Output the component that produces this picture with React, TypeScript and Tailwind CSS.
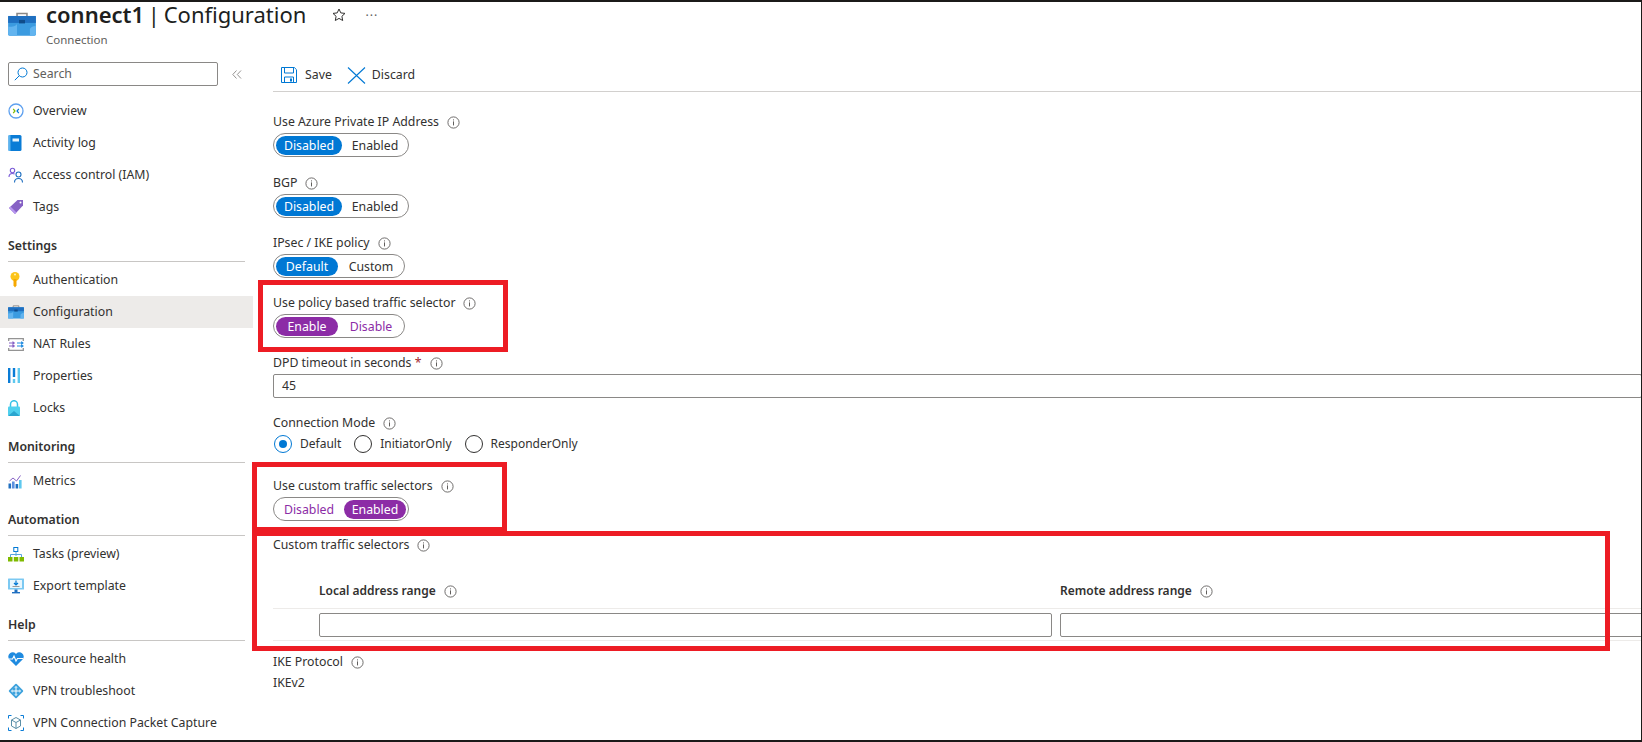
import { ReactNode } from "react";

const Info = () => (
    <svg width="13" height="13" viewBox="0 0 13 13" className="shrink-0">
        <circle cx="6.5" cy="6.5" r="5.6" fill="none" stroke="#605e5c" strokeWidth="0.9" />
        <rect x="6" y="5.4" width="1" height="4" fill="#605e5c" />
        <rect x="6" y="3.4" width="1" height="1" fill="#605e5c" />
    </svg>
);

const Briefcase = ({ size }: { size: number }) => (
    <svg width={size} height={size * 0.85} viewBox="0 0 28 24">
        <path d="M9 5V1.5h10V5" fill="none" stroke="#8a8886" strokeWidth="1.6" />
        <rect x="0" y="4" width="28" height="20" rx="1.5" fill="#3b9be0" />
        <rect x="0" y="4" width="28" height="7" fill="#1f6fc0" />
        <path d="M0 15c5 0 8-1 9-3v12H1.5A1.5 1.5 0 0 1 0 22.5zM28 14c-3 0-5 1-6 3v7h4.5a1.5 1.5 0 0 0 1.5-1.5z" fill="#62b4ef" />
        <rect x="11" y="8" width="6" height="3.5" fill="#0f4c8a" />
    </svg>
);

const icons: Record<string, ReactNode> = {
    overview: (
        <svg width="16" height="16" viewBox="0 0 16 16">
            <circle cx="8" cy="8" r="7" fill="#fff" stroke="#5ea0ef" strokeWidth="1.3" />
            <path d="M5.2 5.8 7 8l-1.8 2.2" fill="none" stroke="#7fba00" strokeWidth="1.2" />
            <path d="M10.8 5.8 9 8l1.8 2.2" fill="none" stroke="#0078d4" strokeWidth="1.2" />
        </svg>
    ),
    activity: (
        <svg width="14" height="16" viewBox="0 0 14 16">
            <rect x="0.5" y="0" width="13" height="16" rx="1.5" fill="#0a7cd6" />
            <rect x="0.5" y="0" width="2" height="16" fill="#5ab4f0" />
            <rect x="4.5" y="3.5" width="6.5" height="3" fill="#e6f3fc" />
        </svg>
    ),
    iam: (
        <svg width="16" height="16" viewBox="0 0 16 16" fill="none" stroke="#1f6fc0" strokeWidth="1.1">
            <circle cx="4.5" cy="3.5" r="2.2" stroke="#7a5bd6" />
            <path d="M1 10c0-2.5 1.5-3.5 3.5-3.5 1 0 1.6.2 2.1.6" stroke="#7a5bd6" />
            <circle cx="10.5" cy="7.5" r="2.5" />
            <path d="M6.5 15.5c0-2.8 1.6-4 4-4s4 1.2 4 4" />
        </svg>
    ),
    tags: (
        <svg width="16" height="16" viewBox="0 0 16 16">
            <path d="M9.5 1H15v5.5L7 15 1 9z" fill="#8661c5" />
            <path d="M1 9l6 6 1.5-1.6-6-6z" fill="#b796f0" />
            <circle cx="12.5" cy="3.5" r="1" fill="#fff" />
        </svg>
    ),
    key: (
        <svg width="14" height="16" viewBox="0 0 14 16">
            <circle cx="7" cy="4.5" r="4.5" fill="#fcc419" />
            <path d="M5.5 7h3v6.5L7 15.5l-1.5-2z" fill="#f6a800" />
            <circle cx="7" cy="2.6" r="1" fill="#fff3bf" />
        </svg>
    ),
    config: <Briefcase size={16} />,
    nat: (
        <svg width="16" height="13" viewBox="0 0 16 13" fill="none">
            <path d="M.7 3V.7h14.6V3M.7 10v2.3h14.6V10" stroke="#949494" strokeWidth="1.3" />
            <path d="M1 5h5M4.5 3.6 6.3 5 4.5 6.4" stroke="#8661c5" strokeWidth="1.1" />
            <path d="M1 8h5M4.5 6.8 6.3 8 4.5 9.4" stroke="#8661c5" strokeWidth="1.1" />
            <path d="M9 5h6M13.2 3.6 15 5l-1.8 1.4" stroke="#1f8be0" strokeWidth="1.1" />
            <path d="M9 8h6M13.2 6.8 15 8l-1.8 1.4" stroke="#1f8be0" strokeWidth="1.1" />
        </svg>
    ),
    props: (
        <svg width="12" height="16" viewBox="0 0 12 16">
            <rect x="0" y="0" width="2.4" height="15" fill="#0a7cd6" />
            <rect x="4.8" y="0" width="2.4" height="9" fill="#0a7cd6" />
            <rect x="4.8" y="11" width="2.4" height="4" fill="#5ec8ee" />
            <rect x="9.6" y="0" width="2.4" height="15" fill="#5ec8ee" />
        </svg>
    ),
    lock: (
        <svg width="12" height="16" viewBox="0 0 12 16">
            <path d="M2.5 7V4.2a3.5 3.5 0 0 1 7 0V7" fill="none" stroke="#37c2e6" strokeWidth="1.5" />
            <rect x="0" y="6.5" width="12" height="9.5" rx="1" fill="#50d0ee" />
            <path d="M0 16l6-5 6 5z" fill="#2aa5cf" />
        </svg>
    ),
    metrics: (
        <svg width="14" height="15" viewBox="0 0 14 14">
            <rect x="0.5" y="9" width="2.6" height="5" fill="#1f6fc0" />
            <rect x="4" y="7" width="2.6" height="7" fill="#5a8fe0" />
            <rect x="7.6" y="9.5" width="2.6" height="4.5" fill="#1f6fc0" />
            <rect x="11" y="5.5" width="2.6" height="8.5" fill="#5ec8ee" />
            <path d="M1.5 6.5 5 3.5l3.5 3L12.5 1" fill="none" stroke="#8661c5" strokeWidth="1" />
        </svg>
    ),
    tasks: (
        <svg width="16" height="15" viewBox="0 0 16 15" fill="none">
            <rect x="5.8" y="0.5" width="4" height="4" stroke="#0078d4" />
            <path d="M8 4.5V9M2.5 10V7.5h11V10" stroke="#59a5de" />
            <rect x="0" y="10" width="4.5" height="4.5" fill="#7fba00" />
            <rect x="5.8" y="10" width="4.5" height="4.5" fill="#7fba00" />
            <rect x="11.5" y="10" width="4.5" height="4.5" fill="#7fba00" />
        </svg>
    ),
    exportT: (
        <svg width="16" height="16" viewBox="0 0 16 16">
            <rect x="0" y="0.5" width="16" height="11" rx="0.5" fill="#7cc9f2" />
            <rect x="2" y="2" width="12" height="8" fill="#e8f6fd" />
            <path d="M8 2.5v4M6 5l2 2 2-2" fill="none" stroke="#0078d4" strokeWidth="1.2" />
            <rect x="4.5" y="8" width="7" height="1" fill="#999" />
            <path d="M6.5 11.5h3V14h-3z" fill="#1f6fc0" />
            <rect x="4" y="14" width="8" height="1.4" fill="#1f6fc0" />
        </svg>
    ),
    health: (
        <svg width="16" height="14" viewBox="0 0 16 14">
            <path d="M8 14 1.2 7.2A4 4 0 0 1 8 2a4 4 0 0 1 6.8 5.2z" fill="#1f8be0" />
            <path d="M1 7h3.5l1.5-3 2 5 1.5-2.5H15" fill="none" stroke="#fff" strokeWidth="1.1" />
        </svg>
    ),
    vpn: (
        <svg width="16" height="16" viewBox="0 0 16 16">
            <rect x="2.6" y="2.6" width="10.8" height="10.8" rx="1" transform="rotate(45 8 8)" fill="#3fa3dd" />
            <path d="M8 3.5v9M3.5 8h9" stroke="#fff" strokeWidth="1" />
            <path d="M6.8 4.8 8 3.5l1.2 1.3M6.8 11.2 8 12.5l1.2-1.3M4.8 6.8 3.5 8l1.3 1.2M11.2 6.8 12.5 8l-1.3 1.2" fill="none" stroke="#fff" strokeWidth="0.8" />
        </svg>
    ),
    capture: (
        <svg width="16" height="16" viewBox="0 0 16 16" fill="none" stroke="#0a7cd6" strokeWidth="1">
            <path d="M.5 3.5v-3h3M12.5.5h3v3M15.5 12.5v3h-3M3.5 15.5h-3v-3" />
            <path d="M8 2.5l4.5 2.5v6L8 13.5 3.5 11V5z" stroke="#5a8fa8" />
            <path d="M3.5 5 8 7.5 12.5 5M8 7.5v6" stroke="#5a8fa8" />
        </svg>
    ),
};

const nav = [
    {
        items: [
            { name: "Overview", icon: "overview" },
            { name: "Activity log", icon: "activity" },
            { name: "Access control (IAM)", icon: "iam" },
            { name: "Tags", icon: "tags" },
        ],
    },
    {
        title: "Settings",
        items: [
            { name: "Authentication", icon: "key" },
            { name: "Configuration", icon: "config", active: true },
            { name: "NAT Rules", icon: "nat" },
            { name: "Properties", icon: "props" },
            { name: "Locks", icon: "lock" },
        ],
    },
    { title: "Monitoring", items: [{ name: "Metrics", icon: "metrics" }] },
    {
        title: "Automation",
        items: [
            { name: "Tasks (preview)", icon: "tasks" },
            { name: "Export template", icon: "exportT" },
        ],
    },
    {
        title: "Help",
        items: [
            { name: "Resource health", icon: "health" },
            { name: "VPN troubleshoot", icon: "vpn" },
            { name: "VPN Connection Packet Capture", icon: "capture" },
        ],
    },
];

function Sidebar() {
    return (
        <div className="w-[253px] shrink-0">
            <div className="flex items-center h-6">
                <div className="ml-2 w-[210px] h-6 border border-[#8a8886] rounded-[2px] flex items-center pl-[5px] gap-[5px] text-[#605e5c]">
                    <svg width="14" height="14" viewBox="0 0 14 14" fill="none" stroke="#0078d4" strokeWidth="1">
                        <circle cx="8.5" cy="5.5" r="4.5" />
                        <path d="M5.3 8.7.8 13.2" />
                    </svg>
                    <span className="pt-[1px]">Search</span>
                </div>
                <svg width="10" height="9" viewBox="0 0 10 9" fill="none" stroke="#8a8886" strokeWidth="0.9" className="ml-[14px]">
                    <path d="M4.5.5.8 4.5l3.7 4M9 .5 5.3 4.5 9 8.5" />
                </svg>
            </div>
            <div className="mt-[9px]">
                {nav.map((group, i) => (
                    <div key={i} className={group.title ? "mt-2" : ""}>
                        {group.title && (
                            <div className="mx-2 h-[31px] pt-[5px] border-b border-[#c8c6c4] font-semibold leading-5 text-[#323130] mb-[2px]">
                                {group.title}
                            </div>
                        )}
                        {group.items.map((item) => (
                            <div
                                key={item.name}
                                className={`flex items-center h-8 ${item.active ? "bg-[#edebe9]" : ""}`}
                            >
                                <div className="w-[33px] pl-2 shrink-0 flex">{icons[item.icon]}</div>
                                {item.name}
                            </div>
                        ))}
                    </div>
                ))}
            </div>
        </div>
    );
}

function Field({ label, required }: { label: string; required?: boolean }) {
    return (
        <div className="flex items-center h-5 gap-2">
            <span>
                {label}
                {required && <span className="text-[#a4262c]"> *</span>}
            </span>
            <Info />
        </div>
    );
}

function Toggle({ left, right, on, purple, narrow }: { left: string; right: string; on: "left" | "right"; purple?: boolean; narrow?: boolean }) {
    const pill = purple ? "bg-[#8c2ca6] text-white" : "bg-[#0078d4] text-white";
    const rest = purple ? "text-[#8c2ca6]" : "text-[#323130]";
    return (
        <div className={`mt-[1px] h-6 border border-[#8a8886] rounded-full p-[2px] grid ${narrow ? "w-[132px] grid-cols-[62px_1fr]" : "w-[136px] grid-cols-[66px_1fr]"}`}>
            <div className={`pt-[1px] rounded-full flex items-center justify-center ${on === "left" ? pill : rest}`}>{left}</div>
            <div className={`pt-[1px] ml-[2px] rounded-full flex items-center justify-center ${on === "right" ? pill : rest}`}>{right}</div>
        </div>
    );
}

function Radio({ label, checked }: { label: string; checked?: boolean }) {
    return (
        <div className="flex items-center gap-2 text-[12px]">
            <div className={`w-[18px] h-[18px] rounded-full border flex items-center justify-center ${checked ? "border-[#0078d4]" : "border-[#323130]"}`}>
                {checked && <div className="w-2 h-2 rounded-full bg-[#0078d4]" />}
            </div>
            {label}
        </div>
    );
}

const inputClass = "h-6 border border-[#8a8886] rounded-[2px] bg-white";

function Form() {
    return (
        <div className="flex-1 min-w-0 pl-5">
            <div className="h-[30px] border-b border-[#d2d0ce] flex items-start pt-1">
                <div className="flex items-center gap-2 ml-2">
                    <svg width="16" height="16" viewBox="0 0 16 16" fill="none" stroke="#0078d4" strokeWidth="1">
                        <path d="M.5.5h12.8l2.2 2.2v12.8H.5z" />
                        <path d="M3.5.5v5.5h9V.5M3.5 15.5V10h9v5.5" />
                        <rect x="9" y="11.5" width="2" height="3" fill="#0078d4" stroke="none" />
                    </svg>
                    Save
                </div>
                <div className="flex items-center gap-[6px] ml-[15px]">
                    <svg width="19" height="17" viewBox="0 0 19 17" fill="none" stroke="#0078d4" strokeWidth="1.1">
                        <path d="M1 .5 18 16.5M18 .5 1 16.5" />
                    </svg>
                    Discard
                </div>
            </div>
            <div className="mt-5">
                <Field label="Use Azure Private IP Address" />
                <Toggle left="Disabled" right="Enabled" on="left" />
            </div>
            <div className="mt-4">
                <Field label="BGP" />
                <Toggle left="Disabled" right="Enabled" on="left" />
            </div>
            <div className="mt-[15px]">
                <Field label="IPsec / IKE policy" />
                <Toggle left="Default" right="Custom" on="left" narrow />
            </div>
            <div className="mt-[15px]">
                <Field label="Use policy based traffic selector" />
                <Toggle left="Enable" right="Disable" on="left" purple narrow />
            </div>
            <div className="mt-[15px]">
                <Field label="DPD timeout in seconds" required />
                <div className={`${inputClass} mt-[1px] flex items-center pl-2 pt-[1px]`}>45</div>
            </div>
            <div className="mt-[15px]">
                <Field label="Connection Mode" />
                <div className="flex items-center gap-[13px] -mt-[1px] h-6 ml-[1px]">
                    <Radio label="Default" checked />
                    <Radio label="InitiatorOnly" />
                    <Radio label="ResponderOnly" />
                </div>
            </div>
            <div className="mt-5">
                <Field label="Use custom traffic selectors" />
                <Toggle left="Disabled" right="Enabled" on="right" purple />
            </div>
            <div className="mt-[14px]">
                <Field label="Custom traffic selectors" />
            </div>
            <div className="mt-[23px] border-b border-[#edebe9] h-[31px] pb-1 flex items-center pl-[46px] font-semibold text-[12px]">
                <div className="w-[741px] flex items-center gap-2">
                    Local address range <Info />
                </div>
                <div className="flex items-center gap-2">
                    Remote address range <Info />
                </div>
            </div>
            <div className="border-b border-[#edebe9] h-[32px] flex items-center pl-[46px] gap-2 overflow-hidden">
                <div className={`${inputClass} w-[733px] shrink-0`} />
                <div className={`${inputClass} flex-1 min-w-[600px]`} />
            </div>
            <div className="mt-[11px]">
                <Field label="IKE Protocol" />
                <div className="mt-[1px] h-5 leading-5">IKEv2</div>
            </div>
        </div>
    );
}

export default function App() {
    return (
        <div className="relative w-[1642px] h-[742px] overflow-hidden bg-white border-t-2 border-t-[#1b1a19] border-b-2 border-b-[#1b1a19] font-['Noto_Sans'] text-[12.3px] text-[#323130]">
            <div className="flex items-start h-[60px] pl-2 pt-[10px]">
                <Briefcase size={28} />
                <div className="ml-[10px] -mt-[14px]">
                    <div className="text-[22px] leading-8 text-[#201f1e] whitespace-nowrap [word-spacing:-2px]">
                        <span className="font-semibold">connect1</span> | Configuration
                    </div>
                    <div className="text-[11.5px] leading-4 mt-[2px] text-[#605e5c]">Connection</div>
                </div>
                <svg width="14" height="14" viewBox="0 0 14 14" fill="none" stroke="#323130" className="ml-[26px] -mt-[4px]">
                    <path d="M7 1l1.8 3.9 4.2.5-3.1 2.9.8 4.2L7 10.4l-3.7 2.1.8-4.2L1 5.4l4.2-.5z" />
                </svg>
                <div className="ml-[19px] -mt-[5px] text-[#605e5c] tracking-[1px]">···</div>
            </div>
            <div className="flex">
                <Sidebar />
                <Form />
            </div>
            {/* annotation boxes over the form */}
            <div className="absolute left-[258px] top-[278px] w-[250px] h-[72px] border-[5px] border-[#ed1c24]" />
            <div className="absolute left-[252px] top-[460px] w-[255px] h-[70px] border-[5px] border-[#ed1c24]" />
            <div className="absolute left-[252px] top-[529px] w-[1358px] h-[120px] border-[5px] border-[#ed1c24]" />
            <div className="absolute right-0 top-0 bottom-0 w-[1px] bg-[#1b1a19]" />
        </div>
    );
}
